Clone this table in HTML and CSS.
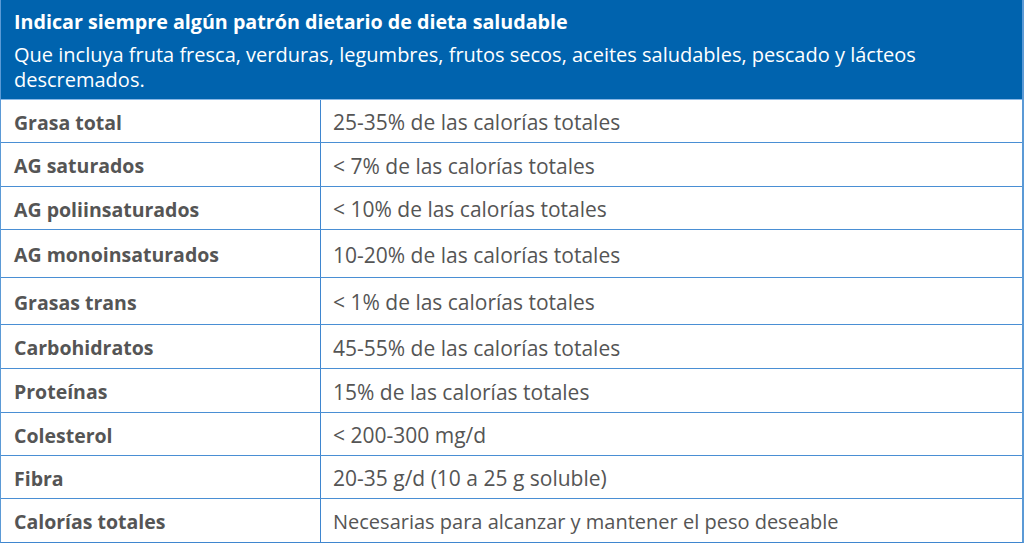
FILE: index.html
```html
<!DOCTYPE html>
<html lang="es">
<head>
<meta charset="utf-8">
<link rel="stylesheet" href="styles.css">
</head>
<body>
<div class="table">
  <div class="head">
    <div class="head-title">Indicar siempre algún patrón dietario de dieta saludable</div>
    <div class="head-sub">Que incluya fruta fresca, verduras, legumbres, frutos secos, aceites saludables, pescado y lácteos descremados.</div>
  </div>
  <div class="row h43"><div class="c1">Grasa total</div><div class="c2">25-35% de las calorías totales</div></div>
  <div class="row h44"><div class="c1">AG saturados</div><div class="c2">&lt; 7% de las calorías totales</div></div>
  <div class="row h43"><div class="c1">AG poliinsaturados</div><div class="c2">&lt; 10% de las calorías totales</div></div>
  <div class="row h48"><div class="c1">AG monoinsaturados</div><div class="c2">10-20% de las calorías totales</div></div>
  <div class="row h47"><div class="c1">Grasas trans</div><div class="c2">&lt; 1% de las calorías totales</div></div>
  <div class="row h44"><div class="c1">Carbohidratos</div><div class="c2">45-55% de las calorías totales</div></div>
  <div class="row h44"><div class="c1">Proteínas</div><div class="c2">15% de las calorías totales</div></div>
  <div class="row h43"><div class="c1">Colesterol</div><div class="c2">&lt; 200-300 mg/d</div></div>
  <div class="row h43"><div class="c1">Fibra</div><div class="c2">20-35 g/d (10 a 25 g soluble)</div></div>
  <div class="row h43 last"><div class="c1">Calorías totales</div><div class="c2 small">Necesarias para alcanzar y mantener el peso deseable</div></div>
</div>
</body>
</html>
```
FILE: styles.css
```css
html, body {
  margin: 0;
  padding: 0;
  background: #ffffff;
}
body {
  font-family: "Open Sans", "Noto Sans", sans-serif;
}
.table {
  width: 1024px;
  height: 543px;
  box-sizing: border-box;
  border-left: 1px solid #5b9ad6;
  border-right: 2px solid #5b9ad6;
  border-bottom: 1px solid #3f86cf;
  display: flex;
  flex-direction: column;
}
.head {
  height: 100px;
  flex: none;
  box-sizing: border-box;
  background: #0063ae;
  color: #ffffff;
  padding: 9px 13px 0 13px;
  border-bottom: 1px solid #8ab8e6;
}
.head-title {
  font-size: 19.7px;
  font-weight: 700;
  line-height: 26px;
}
.head-sub {
  margin-top: 7px;
  font-size: 20px;
  line-height: 25px;
  font-weight: 400;
  padding-right: 80px;
}
.row {
  display: flex;
  flex: none;
  box-sizing: border-box;
  border-bottom: 1px solid #4a8fd4;
  color: #555555;
}
.row.last { border-bottom: none; }
.h43 { height: 43px; }
.h44 { height: 44px; }
.h47 { height: 47px; }
.h48 { height: 48px; }
.c1 {
  width: 320px;
  flex: none;
  box-sizing: border-box;
  border-right: 1px solid #3f86cf;
  padding: 2px 0 0 13px;
  font-size: 19.5px;
  font-weight: 700;
  display: flex;
  align-items: center;
}
.c2 {
  flex: 1;
  padding: 2px 0 0 12px;
  font-size: 21px;
  display: flex;
  align-items: center;
}
.c2.small { font-size: 20px; }
```
